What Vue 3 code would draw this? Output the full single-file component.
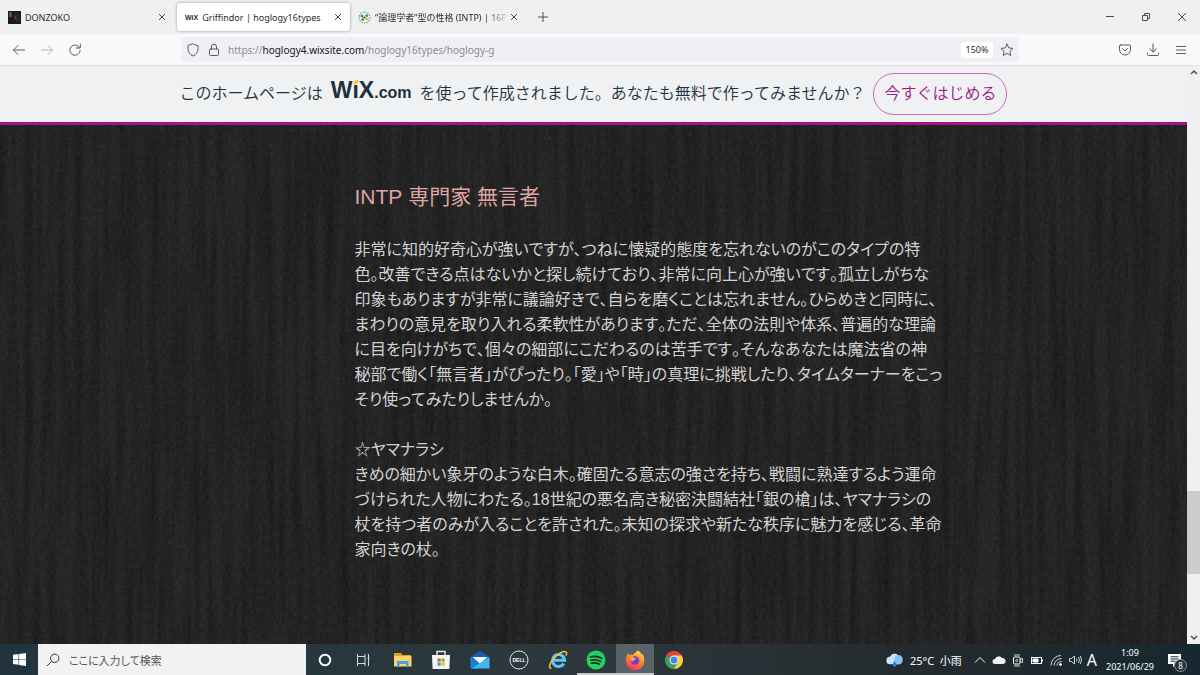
<template>
  <div class="screen">
    <header class="tabs">
      <div class="tab">
        <svg class="favicon" viewBox="0 0 13 13">
          <rect width="13" height="13" fill="#1d1a1c" />
          <path d="M1 1h3v5H1z" fill="#5b4a48" />
          <path d="M6 2l5 1 1 6-4 3z" fill="#2c2a31" />
          <path d="M6 5l2 1-1 3z" fill="#a33c36" />
        </svg>
        <span class="tab-title">DONZOKO</span>
        <button class="close" aria-label="タブを閉じる">
          <svg viewBox="0 0 8 8"><path d="M1 1l6 6M7 1L1 7" /></svg>
        </button>
      </div>
      <div class="tab active">
        <span class="wix-icon">WiX</span>
        <span class="tab-title">Griffindor | hoglogy16types</span>
        <button class="close" aria-label="タブを閉じる">
          <svg viewBox="0 0 8 8"><path d="M1 1l6 6M7 1L1 7" /></svg>
        </button>
      </div>
      <div class="tab last">
        <svg class="favicon" viewBox="0 0 13 13">
          <circle cx="6.5" cy="6.5" r="5.4" fill="#f7faf5" stroke="#65ad86" stroke-width="1.2" stroke-dasharray="1.5 1" />
          <circle cx="4" cy="5" r="1.5" fill="#8a5a93" />
          <circle cx="8.6" cy="4.4" r="1.5" fill="#4298b4" />
          <circle cx="9" cy="8" r="1.5" fill="#dfb538" />
          <circle cx="4.8" cy="8.6" r="1.5" fill="#33a474" />
          <circle cx="6.5" cy="6.5" r="1" fill="#3a4a44" />
        </svg>
        <span class="tab-title fade">“論理学者”型の性格 (INTP) | 16P</span>
        <button class="close" aria-label="タブを閉じる">
          <svg viewBox="0 0 8 8"><path d="M1 1l6 6M7 1L1 7" /></svg>
        </button>
      </div>
      <button class="new-tab" aria-label="新しいタブ">
        <svg viewBox="0 0 10 10"><path d="M5 0v10M0 5h10" /></svg>
      </button>
      <div class="window-buttons">
        <button aria-label="最小化">
          <svg viewBox="0 0 10 10"><path d="M1 4.500h8" /></svg>
        </button>
        <button aria-label="元に戻す">
          <svg viewBox="0 0 10 10"><path d="M1.500 3.500h5v5h-5zM3.500 3.500v-2h5v5h-2" /></svg>
        </button>
        <button aria-label="閉じる">
          <svg viewBox="0 0 10 10"><path d="M1 1l8 8M9 1L1 9" /></svg>
        </button>
      </div>
    </header>

    <nav class="toolbar">
      <button aria-label="戻る">
        <svg viewBox="0 0 14 14"><path d="M12.500 7h-11M6 2.500L1.500 7 6 11.500" /></svg>
      </button>
      <button class="disabled" aria-label="進む">
        <svg viewBox="0 0 14 14"><path d="M1.500 7h11M8 2.500L12.500 7 8 11.500" /></svg>
      </button>
      <button aria-label="再読み込み">
        <svg viewBox="0 0 14 14"><path d="M11.500 4.500A5.200 5.200 0 1 0 12.200 7.500M12.300 1v4h-4" /></svg>
      </button>
      <div class="address">
        <svg viewBox="0 0 14 14"><path d="M7 1l5 1.800v3.400c0 3-2 5.400-5 6.800-3-1.400-5-3.800-5-6.800V2.800z" /></svg>
        <svg viewBox="0 0 14 14"><rect x="2.500" y="6" width="9" height="6.500" rx="1" /><path d="M4.500 6V3.800a2.500 2.500 0 0 1 5 0V6" /></svg>
        <p class="url">https://<b>hoglogy4.wixsite.com</b>/hoglogy16types/hoglogy-g</p>
        <button class="zoom-level">150%</button>
        <button class="star" aria-label="ブックマーク">
          <svg viewBox="0 0 14 14"><path d="M7 1l1.800 3.900 4.200.5-3.100 2.900.8 4.200L7 10.400l-3.700 2.100.8-4.200L1 5.400l4.200-.5z" /></svg>
        </button>
      </div>
      <div class="tools">
        <button aria-label="Pocket">
          <svg viewBox="0 0 14 14"><path d="M2.500 2h9a1 1 0 0 1 1 1v3.500a5.500 5.500 0 0 1-11 0V3a1 1 0 0 1 1-1zM4.500 5.500L7 8l2.500-2.500" /></svg>
        </button>
        <button aria-label="ダウンロード">
          <svg viewBox="0 0 14 14"><path d="M7 1v8M3.800 6L7 9l3.200-3M1.500 10v1.500a1 1 0 0 0 1 1h9a1 1 0 0 0 1-1V10" /></svg>
        </button>
        <button aria-label="メニュー">
          <svg viewBox="0 0 14 14"><path d="M2.500 3.500h9M2.500 7h9M2.500 10.500h9" /></svg>
        </button>
      </div>
    </nav>

    <div class="viewport">
      <div class="page">
        <div class="banner">
          <span class="text">このホームページは</span>
          <span class="text wix">
            <span class="wix-mark">W<span class="wix-i">ı<svg viewBox="0 0 5 5"><path d="M5 0v1.500Q4.500 4 1 4.500V2.500Q1 .5 5 0z" fill="#fbbd12" /></svg></span>X</span>.com
          </span>
          <span class="text">を使って作成されました。あなたも無料で作ってみませんか？</span>
          <a class="start" href="#">今すぐはじめる</a>
        </div>
        <main class="content">
          <svg class="wood" aria-hidden="true">
            <filter id="grain" x="0" y="0" width="100%" height="100%" color-interpolation-filters="sRGB">
              <feTurbulence type="fractalNoise" baseFrequency="0.12 0.006" numOctaves="3" seed="4" result="streaks" />
              <feColorMatrix in="streaks" values="0 0 0 0 0  0 0 0 0 0  0 0 0 0 0  0.600 0 0 0 -0.200" result="dark" />
              <feTurbulence type="fractalNoise" baseFrequency="0.35 0.25" numOctaves="2" seed="9" />
              <feColorMatrix values="0 0 0 0 1  0 0 0 0 1  0 0 0 0 1  0.090 0 0 0 -0.030" result="light" />
              <feMerge>
                <feMergeNode in="dark" />
                <feMergeNode in="light" />
              </feMerge>
            </filter>
            <rect width="100%" height="100%" filter="url(#grain)" />
          </svg>
          <article>
            <h1>INTP 専門家 無言者</h1>
            <p v-for="(lines, i) in paragraphs" :key="i">
              <span v-for="line in lines" :key="line">{{ line }}</span>
            </p>
          </article>
        </main>
      </div>
      <div class="scrollbar">
        <svg viewBox="0 0 8 8"><path d="M1 5.500l3-3 3 3" /></svg>
        <div class="track"><div class="thumb"></div></div>
        <svg viewBox="0 0 8 8"><path d="M1 2.500l3 3 3-3" /></svg>
      </div>
    </div>

    <footer class="taskbar">
      <button class="windows" aria-label="スタート">
        <svg viewBox="0 0 14 14"><path d="M0 2l6-.9v5.500H0zM6.600 1L14 0v6.600H6.600zM0 7.200h6v5.500L0 11.900zM6.600 7.200H14V14l-7.400-1.100z" fill="#fff" /></svg>
      </button>
      <label class="search">
        <svg viewBox="0 0 14 14"><circle cx="8.700" cy="5.300" r="4.200" /><path d="M5.700 8.400L1 13" /></svg>
        <input type="text" placeholder="ここに入力して検索" aria-label="ここに入力して検索" />
      </label>
      <div class="apps">
        <button class="app" aria-label="Cortana">
          <svg viewBox="0 0 20 20"><circle cx="10" cy="10" r="5.300" fill="none" stroke="#fff" stroke-width="1.900" /></svg>
        </button>
        <button class="app" aria-label="タスクビュー">
          <svg viewBox="0 0 20 20"><path d="M3.500 4v2.500h7.500V4M3.500 16v-2.500h7.500V16M3.500 6.500v7M11 6.500v7M14.500 4v12M13.500 8h2" fill="none" stroke="#d5dadd" /></svg>
        </button>
        <button class="app" aria-label="エクスプローラー">
          <svg viewBox="0 0 20 20">
            <path d="M1 3h7l1.500 2H18v11H1z" fill="#dfa123" />
            <path d="M1 6h17.500v10.500H1z" fill="#fbd468" />
            <path d="M4 17v-6h11.500v6H13v-3H6.500v3z" fill="#4aa0e0" />
          </svg>
        </button>
        <button class="app" aria-label="Microsoft Store">
          <svg viewBox="0 0 20 20">
            <path d="M6 6V1.500h8V6" fill="none" stroke="#e7eaeb" stroke-width="1.400" />
            <path d="M1 5h18l-.6 14H1.600z" fill="#f4f4f4" />
            <path d="M6.500 8.500h3.200v3.200H6.500z" fill="#e85428" />
            <path d="M10.500 8.500h3.200v3.200h-3.200z" fill="#7bb62e" />
            <path d="M6.500 12.500h3.200v3.200H6.500z" fill="#27a1e0" />
            <path d="M10.500 12.500h3.200v3.200h-3.200z" fill="#f5b91d" />
          </svg>
        </button>
        <button class="app" aria-label="メール">
          <svg viewBox="0 0 20 20">
            <path d="M.5 7L10 1l9.500 6v4H.5z" fill="#1160a9" />
            <path d="M2.500 7h15l-7.500 7z" fill="#f2f8fc" />
            <path d="M.5 7l10.500 8-3 3.500H.5z" fill="#1684d4" />
            <path d="M19.500 7v11.500H2L10 13z" fill="#42b8f3" />
          </svg>
        </button>
        <button class="app" aria-label="Dell">
          <svg viewBox="0 0 20 20">
            <circle cx="10" cy="10" r="9" fill="none" stroke="#dfe4e6" />
            <text x="10" y="12" text-anchor="middle" font-family="Liberation Sans" font-size="5" font-weight="bold" fill="#fff">DELL</text>
          </svg>
        </button>
        <button class="app" aria-label="Internet Explorer">
          <svg viewBox="0 0 20 20">
            <path d="M15.800 13.500a6 6 0 1 1 .8-3.200H6" fill="none" stroke="#5bc8f5" stroke-width="3" />
            <path d="M3.500 18c-3 .5-2.500-3 .5-7.200C8 5 15.500 0 18 2c1 .8.600 2.400-.2 3.600" fill="none" stroke="#f4c534" stroke-width="1.500" />
          </svg>
        </button>
        <button class="app running" aria-label="Spotify">
          <svg viewBox="0 0 20 20">
            <circle cx="10" cy="10" r="9.500" fill="#1fd35e" />
            <path d="M4.300 7q6-1.700 11.500 1.200M5 10.200q5-1.300 9.700 1.200M5.500 13.200q4.300-1 8 1" fill="none" stroke="#102a1c" stroke-width="1.600" stroke-linecap="round" />
          </svg>
        </button>
        <button class="app running current" aria-label="Firefox">
          <svg viewBox="0 0 20 20">
            <defs>
              <linearGradient id="fox" x1=".8" y1="0" x2=".3" y2="1">
                <stop offset="0" stop-color="#ffe44d" />
                <stop offset=".45" stop-color="#ff8b2b" />
                <stop offset="1" stop-color="#f2305f" />
              </linearGradient>
            </defs>
            <path d="M13 .5c3 2 3 3.500 4 4.200.2-.7 0-1 0-1.500 2 3 2.500 5 2.200 8A9.200 9.200 0 0 1 .8 11C.6 7.500 2 4.500 3.500 3c0 1 .2 1.400.5 2C6 4 7 4.500 8 5c2-2.500 3-3 5-4.500z" fill="url(#fox)" />
            <circle cx="10" cy="10.500" r="4.300" fill="#7a3bd0" />
            <path d="M4 7c2-1.500 4-.5 5 .8 1.500.2 2 .7 2 1.200-.5 1-3 .8-3 2.500C5.500 11 4 9 4 7z" fill="#ffa12c" />
          </svg>
        </button>
        <button class="app" aria-label="Chrome">
          <svg viewBox="0 0 20 20">
            <path d="M10 10L2.200 5.500a9 9 0 0 1 15.600 0z" fill="#e5483a" />
            <path d="M10 10V5.500h7.800A9 9 0 0 1 10 19z" fill="#fccb3c" />
            <path d="M10 10l3.900 2.200L10 19A9 9 0 0 1 2.200 5.500z" fill="#36a455" />
            <circle cx="10" cy="10" r="4.500" fill="#f4f7f8" />
            <circle cx="10" cy="10" r="3.500" fill="#4286f0" />
          </svg>
        </button>
      </div>
      <div class="tray">
        <button class="weather">
          <svg viewBox="0 0 16 16">
            <path d="M4 12.500a3.500 3.500 0 0 1-.3-7A4.500 4.500 0 0 1 12 5a3.800 3.800 0 0 1 .3 7.500z" fill="#c7e4fa" />
            <path d="M8 6a4 4 0 0 1 7.500 2.500 3.400 3.400 0 0 1-3 4H7z" fill="#8ac3f1" />
            <path d="M8 9.500q3.500 4.500 0 5.500-3.500-1 0-5.500z" fill="#2584d8" />
          </svg>
          25°C&ensp;小雨
        </button>
        <div class="status">
          <svg viewBox="0 0 14 14"><path d="M2 9.500l5-5 5 5" /></svg>
          <svg viewBox="0 0 14 14"><path d="M3 11a2.500 2.500 0 0 1 0-5 4 4 0 0 1 7-1 3 3 0 0 1 1 6z" fill="#eef0f1" stroke="none" /></svg>
          <svg viewBox="0 0 14 14"><rect x="2.500" y="4" width="6.500" height="7" rx="1" /><circle cx="5.700" cy="7.500" r="1" stroke-width=".8" /><path d="M9 6.500l2.500-1v4L9 8.500M3 2h6M3 13h6" stroke-width=".8" /></svg>
          <svg viewBox="0 0 14 14"><rect x="1.500" y="4.500" width="10" height="6" /><path d="M3 6h5v3H3z" fill="#fff" /><path d="M12.500 6.500v2" /></svg>
          <svg viewBox="0 0 14 14"><path d="M2 12.500A10 10 0 0 1 12 2.500M5 12.500a7.500 7.500 0 0 1 7.500-7M8 12.500a4.500 4.500 0 0 1 4.500-4" stroke-width=".8" /><circle cx="11.500" cy="11.500" r="1" fill="#fff" /></svg>
          <svg viewBox="0 0 14 14"><path d="M1.500 5.500h2L6.500 3v8L3.500 8.500h-2zM8.500 5.500q1 1.500 0 3M10.500 4q2 3 0 6M12.300 3q2.400 4 0 8" stroke-width=".8" /></svg>
        </div>
        <span class="ime">A</span>
        <button class="clock"><span>1:09</span><span>2021/06/29</span></button>
        <button class="notice" aria-label="通知">
          <svg viewBox="0 0 14 14"><path d="M0 1h13v10H8l-3 3v-3H0z" fill="#fff" /><path d="M2.500 3.800h8M2.500 6h8M2.500 8.200h5" stroke="#1d2d34" /></svg>
          <span class="count">8</span>
        </button>
      </div>
    </footer>
  </div>
</template>

<script setup>
const paragraphs = [
  [
    '非常に知的好奇心が強いですが、つねに懐疑的態度を忘れないのがこのタイプの特',
    '色。改善できる点はないかと探し続けており、非常に向上心が強いです。孤立しがちな',
    '印象もありますが非常に議論好きで、自らを磨くことは忘れません。ひらめきと同時に、',
    'まわりの意見を取り入れる柔軟性があります。ただ、全体の法則や体系、普遍的な理論',
    'に目を向けがちで、個々の細部にこだわるのは苦手です。そんなあなたは魔法省の神',
    '秘部で働く「無言者」がぴったり。「愛」や「時」の真理に挑戦したり、タイムターナーをこっ',
    'そり使ってみたりしませんか。',
  ],
  [
    '☆ヤマナラシ',
    'きめの細かい象牙のような白木。確固たる意志の強さを持ち、戦闘に熟達するよう運命',
    'づけられた人物にわたる。18世紀の悪名高き秘密決闘結社「銀の槍」は、ヤマナラシの',
    '杖を持つ者のみが入ることを許された。未知の探求や新たな秩序に魅力を感じる、革命',
    '家向きの杖。',
  ],
];
</script>

<style>
body {
  margin: 0;
}
</style>

<style scoped>
.screen {
  display: flex;
  flex-direction: column;
  height: 100vh;
  overflow: hidden;
  font-family: "Noto Sans", "Noto Sans CJK JP", sans-serif;
  font-size: 10px;
  color: #2b2a33;
}

button {
  display: flex;
  align-items: center;
  justify-content: center;
  padding: 0;
  border: 0;
  background: none;
  font: inherit;
  color: inherit;
}

svg {
  display: block;
  flex: none;
}

/* tabs */
.tabs {
  display: flex;
  flex: none;
  align-items: center;
  height: 34px;
  background: #f0f0f0;
  font-size: 9px;
}

.tabs svg {
  fill: none;
  stroke: #4a4a50;
}

.tab {
  display: flex;
  align-items: center;
  box-sizing: border-box;
  width: 177px;
  height: 28px;
  padding: 0 11px 0 8px;
  gap: 4px;
}

.tab.active {
  width: 173px;
  padding: 0 8px;
  border-radius: 3px;
  background: #fff;
  box-shadow: 0 0 3px #0006;
}

.tab.last {
  width: 176px;
  padding: 0 8px;
}

.tabs .favicon {
  width: 13px;
  height: 13px;
  stroke: none;
}

.wix-icon {
  font-family: "Liberation Sans", sans-serif;
  font-size: 7px;
  font-weight: bold;
}

.tab-title {
  flex: 1;
  min-width: 0;
  white-space: nowrap;
}

.fade {
  mask-image: linear-gradient(to right, #000 84%, #0003);
}

.close svg {
  width: 8px;
  height: 8px;
}

.new-tab {
  width: 34px;
}

.new-tab svg,
.window-buttons svg {
  width: 10px;
  height: 10px;
}

.window-buttons {
  display: flex;
  margin-left: auto;
}

.window-buttons button {
  width: 36px;
  height: 34px;
}

/* toolbar */
.toolbar {
  display: flex;
  flex: none;
  align-items: center;
  box-sizing: border-box;
  height: 32px;
  padding: 0 5px;
  border-bottom: 1px solid #dfdfe2;
  background: #f9f9fb;
}

.toolbar svg {
  width: 14px;
  height: 14px;
  fill: none;
  stroke: #5b5b66;
  stroke-linecap: round;
  stroke-linejoin: round;
}

.toolbar button {
  width: 28px;
  height: 26px;
}

.toolbar .disabled {
  opacity: 0.4;
}

.address {
  display: flex;
  flex: 1;
  align-items: center;
  box-sizing: border-box;
  max-width: 838px;
  height: 25px;
  margin-left: 92px;
  padding: 0 5px;
  gap: 7px;
  border-radius: 3px;
  background: #f0f0f4;
}

.url {
  flex: 1;
  margin: 0;
  color: #8a8a92;
}

.url b {
  font-weight: normal;
  color: #15141a;
}

.toolbar .zoom-level {
  width: 32px;
  height: 16px;
  border-radius: 2px;
  background: #fff;
  font-size: 9px;
}

.toolbar .star {
  width: 14px;
}

.tools {
  display: flex;
  margin-left: auto;
}

/* page */
.viewport {
  display: flex;
  flex: 1;
  min-height: 0;
}

.page {
  display: flex;
  flex: 1;
  flex-direction: column;
}

.banner {
  display: flex;
  flex: none;
  align-items: center;
  justify-content: center;
  box-sizing: border-box;
  height: 59px;
  padding-bottom: 1px;
  gap: 8px;
  border-bottom: 3px solid #a0148c;
  background: #eff1f2;
  font-family: "Noto Sans CJK JP", sans-serif;
  font-size: 16px;
  font-weight: 350;
  color: #20303c;
}

.text {
  padding-bottom: 4px;
}

.wix {
  font-family: "Liberation Sans", sans-serif;
  font-weight: bold;
  line-height: 24px;
}

.wix-mark {
  font-size: 23px;
}

.wix-i {
  position: relative;
}

.wix-i svg {
  position: absolute;
  top: 3px;
  left: 1px;
  width: 5px;
  height: 5px;
}

.start {
  box-sizing: border-box;
  height: 42px;
  padding: 0 10px;
  border: 1px solid #c66bbb;
  border-radius: 21px;
  line-height: 36px;
  color: #a0148c;
  text-decoration: none;
}

.content {
  position: relative;
  display: flex;
  flex: 1;
  min-height: 0;
  justify-content: center;
  background: #242424;
}

.wood {
  position: absolute;
  top: 0;
  left: 0;
  width: 100%;
  height: 100%;
}

article {
  position: relative;
  box-sizing: border-box;
  width: 50%;
  min-width: 600px;
  padding-top: 57px;
  padding-left: 61px;
  white-space: nowrap;
  font-family: "Liberation Sans", "Noto Sans CJK JP", sans-serif;
  font-feature-settings: "palt";
  font-kerning: none;
  font-size: 16px;
  line-height: 25px;
  color: #d2d2d2;
}

h1 {
  margin: 0 0 25px;
  font-size: 21px;
  font-weight: normal;
  line-height: 30px;
  color: #dea5a4;
}

p span {
  display: block;
}

article p {
  margin: 0 0 25px;
}

.scrollbar {
  display: flex;
  flex: none;
  flex-direction: column;
  align-items: center;
  width: 13px;
  background: #f0f0f0;
}

.scrollbar svg {
  width: 8px;
  height: 13px;
  fill: none;
  stroke: #505050;
  stroke-width: 1.5;
}

.track {
  display: flex;
  flex: 1;
  flex-direction: column;
  justify-content: flex-end;
  width: 100%;
}

.thumb {
  height: 15%;
  margin-bottom: 57px;
  background: #cdcdcd;
}

/* taskbar */
.taskbar {
  display: flex;
  flex: none;
  height: 31px;
  background: linear-gradient(to right, #22343f, #2d383c 50%, #242b2f 75%, #182830);
  color: #fff;
}

.windows {
  width: 38px;
}

.windows svg {
  width: 13px;
  height: 13px;
}

.search {
  display: flex;
  align-items: center;
  box-sizing: border-box;
  width: 268px;
  padding: 0 8px;
  gap: 9px;
  background: #f2f2f2;
}

.search svg {
  width: 14px;
  height: 14px;
  fill: none;
  stroke: #333;
}

.search input {
  flex: 1;
  min-width: 0;
  padding: 0;
  border: 0;
  outline: 0;
  background: none;
  font-family: "Noto Sans CJK JP", sans-serif;
  font-feature-settings: "palt";
  font-size: 11px;
}

.search input::placeholder {
  color: #555;
}

.apps {
  display: flex;
  width: 387px;
}

.app {
  box-sizing: border-box;
  flex: 1;
  border-top: 2px solid transparent;
  border-bottom: 2px solid transparent;
}

.app svg {
  width: 20px;
  height: 20px;
}

.running {
  border-bottom-color: #c4cacd;
}

.current {
  border-top-color: #586268;
  background: #586268;
}

.tray {
  display: flex;
  align-items: center;
  margin-left: auto;
}

.weather {
  gap: 7px;
  font-size: 11px;
}

.weather svg {
  width: 17px;
  height: 17px;
}

.status {
  display: flex;
  gap: 5px;
  margin-left: 11px;
}

.status svg {
  width: 14px;
  height: 14px;
  fill: none;
  stroke: #fff;
}

.ime {
  margin-left: 5px;
  font-size: 16px;
}

.clock {
  flex-direction: column;
  width: 66px;
  font-size: 9px;
  line-height: 14px;
}

.notice {
  position: relative;
  justify-content: flex-start;
  width: 37px;
  height: 31px;
  padding-left: 5px;
}

.notice svg {
  width: 14px;
  height: 14px;
  fill: none;
}

.count {
  position: absolute;
  right: 13px;
  bottom: 3px;
  width: 11px;
  height: 11px;
  border: 1px solid #8b9498;
  border-radius: 50%;
  background: #273238;
  font-size: 8px;
  line-height: 11px;
  text-align: center;
}
</style>
